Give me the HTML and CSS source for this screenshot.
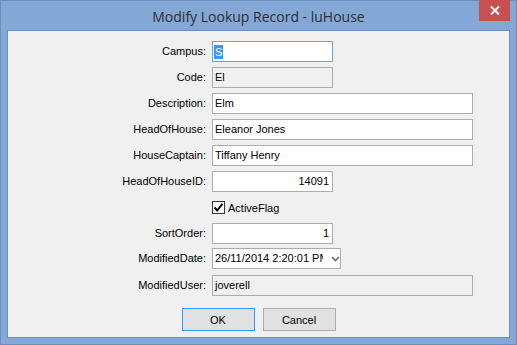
FILE: index.html
```html
<!DOCTYPE html>
<html>
<head>
<meta charset="utf-8">
<title>Modify Lookup Record - luHouse</title>
<link rel="stylesheet" href="styles.css">
</head>
<body>
<div class="window">
  <div class="titlebar">
    <span class="title">Modify Lookup Record - luHouse</span>
    <div class="close">
      <svg width="10" height="9" viewBox="0 0 10 9"><path d="M1 0.5 L9 8.5 M9 0.5 L1 8.5" stroke="#fff" stroke-width="2" fill="none"/></svg>
    </div>
  </div>
  <div class="client">
    <div class="form">
      <label class="lbl">Campus:</label>
      <div class="field short focus"><span class="sel">S</span></div>

      <label class="lbl">Code:</label>
      <div class="field short ro">El</div>

      <label class="lbl">Description:</label>
      <div class="field wide">Elm</div>

      <label class="lbl">HeadOfHouse:</label>
      <div class="field wide">Eleanor Jones</div>

      <label class="lbl">HouseCaptain:</label>
      <div class="field wide">Tiffany Henry</div>

      <label class="lbl">HeadOfHouseID:</label>
      <div class="field short num">14091</div>

      <span class="lbl"></span>
      <div class="check">
        <span class="box">
          <svg width="11" height="11" viewBox="0 0 11 11"><path d="M1.5 5.5 L4.2 8.5 L9.5 1.8" stroke="#000" stroke-width="2" fill="none"/></svg>
        </span>
        <span class="check-text">ActiveFlag</span>
      </div>

      <label class="lbl">SortOrder:</label>
      <div class="field short num">1</div>

      <label class="lbl">ModifiedDate:</label>
      <div class="combo">
        <span class="combo-text">26/11/2014 2:20:01 PM</span>
        <svg class="chev" width="9" height="6" viewBox="0 0 9 6"><path d="M1 1 L4.5 4.5 L8 1" stroke="#6d6d6d" stroke-width="1.6" fill="none"/></svg>
      </div>

      <label class="lbl">ModifiedUser:</label>
      <div class="field wide ro">joverell</div>
    </div>
    <div class="buttons">
      <button class="btn default">OK</button>
      <button class="btn">Cancel</button>
    </div>
  </div>
</div>
</body>
</html>
```

FILE: styles.css
```css
html, body {
  margin: 0;
  padding: 0;
  background: #83a8d5;
}

.window {
  position: relative;
  width: 517px;
  height: 345px;
  box-sizing: border-box;
  border: 1px solid #6c8fbd;
  background: #83a8d5;
  padding: 0 6px 6px 6px;
  display: flex;
  flex-direction: column;
  font-family: "Liberation Sans", Arial, sans-serif;
  font-size: 11px;
  color: #000;
}

.titlebar {
  height: 29px;
  display: flex;
  align-items: center;
  justify-content: center;
}

.title {
  font-family: "Open Sans", "Noto Sans", sans-serif;
  font-size: 14px;
  color: #2e2e2e;
  margin-top: 1px;
}

.close {
  position: absolute;
  top: -1px;
  left: 478px;
  width: 31px;
  height: 21px;
  background: #c75050;
  display: flex;
  align-items: center;
  justify-content: center;
}

.client {
  flex: 1;
  border: 1px solid #6c8fbd;
  background: #f0f0f0;
  display: flex;
  flex-direction: column;
}

.form {
  display: grid;
  grid-template-columns: 199px 1fr;
  column-gap: 5px;
  grid-template-rows: 26px 26px 26px 26px 26px 28px 24px 25px 27px 33px;
  padding-top: 10px;
}

.lbl {
  display: block;
  text-align: right;
  line-height: 21px;
  height: 21px;
  padding-right: 1px;
}

.field {
  box-sizing: border-box;
  height: 21px;
  border: 1px solid #abadb3;
  background: #fff;
  line-height: 19px;
  padding: 0 3px 0 2px;
  white-space: nowrap;
  overflow: hidden;
}

.short { width: 121px; }
.wide { width: 261px; }

.num { text-align: right; }

.ro {
  background: #f0f0f0;
  border-color: #acacac;
}

.focus { border-color: #64a5e8; }

.sel {
  display: inline-block;
  background: #3399ff;
  color: #fff;
  line-height: 14px;
  padding: 0 1px;
  margin-left: -1px;
  vertical-align: middle;
}

.check {
  display: flex;
  align-items: center;
  height: 15px;
  margin-top: 1px;
  gap: 3px;
}

.box {
  box-sizing: border-box;
  width: 13px;
  height: 13px;
  border: 1px solid #333;
  background: #fff;
  display: flex;
  align-items: center;
  justify-content: center;
}

.combo {
  box-sizing: border-box;
  width: 129px;
  height: 21px;
  border: 1px solid #acacac;
  background: #fff;
  display: flex;
  align-items: center;
  padding-left: 2px;
}

.combo-text {
  width: 108px;
  overflow: hidden;
  white-space: nowrap;
  line-height: 19px;
}

.chev {
  margin-left: 8px;
}

.buttons {
  display: flex;
  justify-content: center;
  gap: 8px;
}

.btn {
  box-sizing: border-box;
  width: 73px;
  height: 23px;
  border: 1px solid #adadad;
  background: #e1e1e1;
  font-family: "Liberation Sans", Arial, sans-serif;
  font-size: 11px;
  color: #000;
  padding: 0;
  margin: 0;
}

.btn.default { border-color: #3399ff; }
```
